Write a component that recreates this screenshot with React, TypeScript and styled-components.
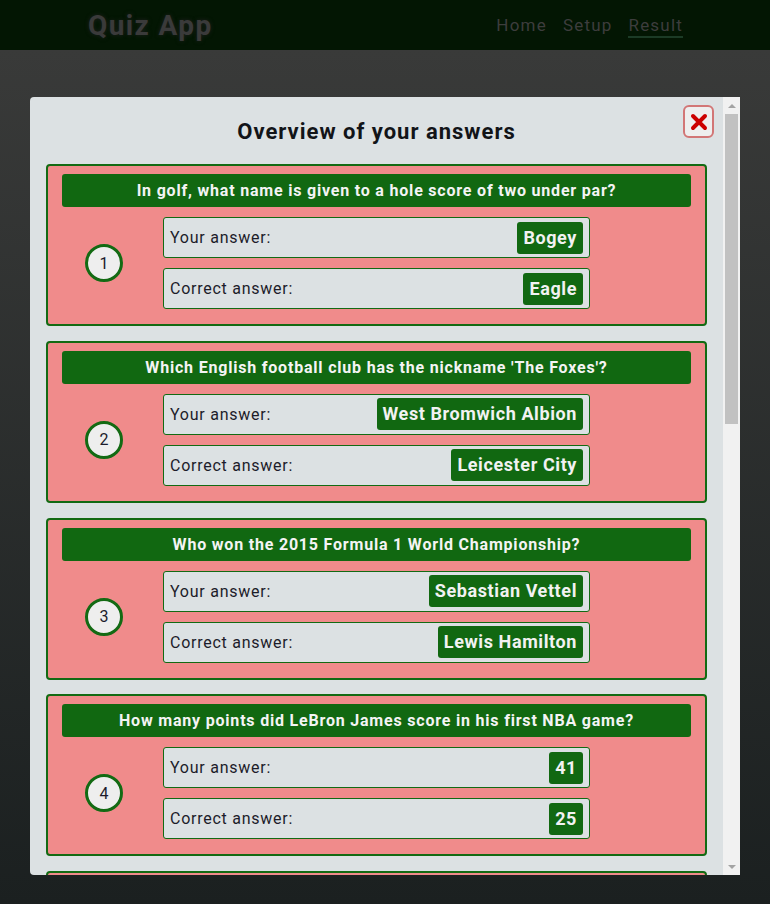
import React, { FC } from 'react';
import styled, { createGlobalStyle } from 'styled-components';

interface Answer {
  question: string;
  yours: string;
  correct: string;
}

const answers: Answer[] = [
  {
    question: 'In golf, what name is given to a hole score of two under par?',
    yours: 'Bogey',
    correct: 'Eagle',
  },
  {
    question: "Which English football club has the nickname 'The Foxes'?",
    yours: 'West Bromwich Albion',
    correct: 'Leicester City',
  },
  {
    question: 'Who won the 2015 Formula 1 World Championship?',
    yours: 'Sebastian Vettel',
    correct: 'Lewis Hamilton',
  },
  {
    question: 'How many points did LeBron James score in his first NBA game?',
    yours: '41',
    correct: '25',
  },
  {
    question: 'Which country won the 2018 FIFA World Cup?',
    yours: 'Croatia',
    correct: 'France',
  },
];

const GlobalStyle = createGlobalStyle`
  html, body {
    margin: 0;
    padding: 0;
    height: 100%;
  }
  body {
    font-family: Roboto, "Liberation Sans", sans-serif;
    background: #1b2020;
  }
  #root {
    height: 100%;
  }
`;

const Page = styled.div`
  height: 100vh;
  display: flex;
  flex-direction: column;
  overflow: hidden;
`;

const Header = styled.header`
  height: 50px;
  flex-shrink: 0;
  background: #031603;
  display: flex;
  align-items: center;
  justify-content: space-between;
  padding: 0 87px 0 88px;
  box-sizing: border-box;
`;

const Logo = styled.div`
  font-size: 28px;
  font-weight: 700;
  letter-spacing: 1.4px;
  color: #3a3a3a;
  text-shadow: 0 0 4px #1f1f1f;
`;

const Nav = styled.nav`
  display: flex;
  gap: 16px;
  align-items: center;
  padding-top: 3px;
`;

const NavLink = styled.span<{ $active?: boolean }>`
  font-size: 17px;
  letter-spacing: 1.2px;
  color: #3d3d3d;
  padding-bottom: 1px;
  border-bottom: 2px solid ${({ $active }) => ($active ? '#1c3b26' : 'transparent')};
`;

const Backdrop = styled.main`
  flex: 1;
  background: linear-gradient(#393a39, #1b2020);
  padding: 47px 30px 29px;
  min-height: 0;
  display: flex;
`;

const Modal = styled.section`
  flex: 1;
  display: flex;
  background: #dce1e3;
  border-radius: 4px 0 0 4px;
  overflow: hidden;
`;

const Content = styled.div`
  position: relative;
  flex: 1;
  overflow: hidden;
`;

const ScrollBar = styled.div`
  width: 17px;
  flex-shrink: 0;
  background: #f1f1f1;
  display: flex;
  flex-direction: column;
`;

const ScrollArrow = styled.div<{ $down?: boolean }>`
  height: 17px;
  display: flex;
  align-items: center;
  justify-content: center;

  &::before {
    content: '';
    border-left: 4px solid transparent;
    border-right: 4px solid transparent;
    ${({ $down }) =>
      $down ? 'border-top: 4px solid #a3a3a3;' : 'border-bottom: 4px solid #a3a3a3;'}
  }
`;

const ScrollTrack = styled.div`
  flex: 1;
`;

const ScrollThumb = styled.div`
  height: 310px;
  margin: 0 2px;
  background: #c1c1c1;
`;

const Title = styled.h2`
  margin: 0;
  padding: 20px 0 17px;
  text-align: center;
  font-size: 22px;
  line-height: 30px;
  font-weight: 700;
  letter-spacing: 1px;
  color: #121418;
`;

const CloseButton = styled.button`
  position: absolute;
  top: 8px;
  right: 9px;
  width: 31px;
  height: 33px;
  padding: 0;
  border: 2px solid #d27676;
  border-radius: 6px;
  background: #eeeeee;
  display: flex;
  align-items: center;
  justify-content: center;
  cursor: pointer;
`;

const Card = styled.article`
  margin: 0 16px 14.75px;
  border: 2px solid #136a13;
  border-radius: 4px;
  background: #f08b8b;
  padding: 8px 14px 15px;
`;

const Question = styled.div`
  height: 33px;
  background: #116811;
  border-radius: 3px;
  color: #f4f4f4;
  font-size: 16px;
  font-weight: 700;
  letter-spacing: 0.8px;
  display: flex;
  align-items: center;
  justify-content: center;
`;

const Body = styled.div`
  margin-top: 10px;
  display: grid;
  grid-template-columns: 101px 427px;
  align-items: center;
`;

const Number = styled.div`
  width: 38px;
  height: 38px;
  box-sizing: border-box;
  margin-left: 23px;
  border: 3px solid #136a13;
  border-radius: 50%;
  background: #eeeeee;
  color: #1c1c2c;
  font-size: 16px;
  display: flex;
  align-items: center;
  justify-content: center;
`;

const Rows = styled.div`
  display: flex;
  flex-direction: column;
  gap: 10px;
`;

const Row = styled.div`
  height: 41px;
  box-sizing: border-box;
  border: 1px solid #136a13;
  border-radius: 3px;
  background: #dce1e3;
  padding: 0 6px;
  display: flex;
  align-items: center;
  justify-content: space-between;
`;

const Label = styled.span`
  font-size: 16px;
  letter-spacing: 0.75px;
  color: #1c1c2a;
`;

const Badge = styled.span`
  height: 32px;
  line-height: 32px;
  padding: 0 6px;
  border-radius: 3px;
  background: #116811;
  color: #f2f2f2;
  font-size: 18px;
  font-weight: 700;
  letter-spacing: 0.6px;
`;

const AnswerCard: FC<{ answer: Answer; index: number }> = ({ answer, index }) => (
  <Card>
    <Question>{answer.question}</Question>
    <Body>
      <Number>{index + 1}</Number>
      <Rows>
        <Row>
          <Label>Your answer:</Label>
          <Badge>{answer.yours}</Badge>
        </Row>
        <Row>
          <Label>Correct answer:</Label>
          <Badge>{answer.correct}</Badge>
        </Row>
      </Rows>
    </Body>
  </Card>
);

const App: FC = () => (
  <>
    <GlobalStyle />
    <Page>
      <Header>
        <Logo>Quiz App</Logo>
        <Nav>
          <NavLink>Home</NavLink>
          <NavLink>Setup</NavLink>
          <NavLink $active>Result</NavLink>
        </Nav>
      </Header>
      <Backdrop>
        <Modal>
          <Content>
            <CloseButton aria-label="Close">
              <svg width="20" height="20" viewBox="0 0 20 20">
                <path
                  d="M4 4 L16 16 M16 4 L4 16"
                  stroke="#cc0000"
                  strokeWidth="4"
                  strokeLinecap="round"
                />
              </svg>
            </CloseButton>
            <Title>Overview of your answers</Title>
            {answers.map((a, i) => (
              <AnswerCard key={a.question} answer={a} index={i} />
            ))}
          </Content>
          <ScrollBar>
            <ScrollArrow />
            <ScrollTrack>
              <ScrollThumb />
            </ScrollTrack>
            <ScrollArrow $down />
          </ScrollBar>
        </Modal>
      </Backdrop>
    </Page>
  </>
);

export default App;
